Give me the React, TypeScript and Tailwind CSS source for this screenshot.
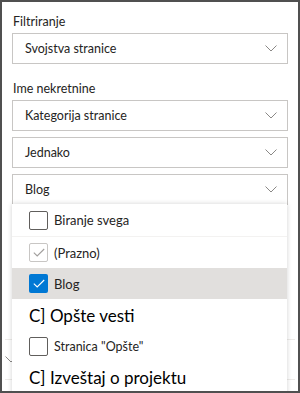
import React from "react";

const Chevron = () => (
  <svg width="12" height="7" viewBox="0 0 12 7" className="shrink-0">
    <path d="M0.5 0.5 L6 6 L11.5 0.5" fill="none" stroke="#8a8886" strokeWidth="1" />
  </svg>
);

const Select = ({ value }: { value: string }) => (
  <div className="h-[31px] border border-[#c8c6c4] bg-white flex items-center justify-between pl-[12px] pr-[10px]">
    <span className="mt-px text-[12.5px] text-[#252423]">{value}</span>
    <Chevron />
  </div>
);

const Check = ({ color }: { color: string }) => (
  <svg width="12" height="9" viewBox="0 0 12 9">
    <path d="M0.8 4.6 L4.2 8 L11.2 1" fill="none" stroke={color} strokeWidth="1.1" />
  </svg>
);

const Checkbox = ({ state }: { state: "off" | "on" | "disabled" }) => {
  if (state === "on")
    return (
      <div className="w-[19px] h-[19px] rounded-[2px] bg-[#0078d4] flex items-center justify-center">
        <Check color="#ffffff" />
      </div>
    );
  if (state === "disabled")
    return (
      <div className="w-[19px] h-[19px] rounded-[2px] border border-[#c8c6c4] flex items-center justify-center">
        <Check color="#a19f9d" />
      </div>
    );
  return <div className="w-[19px] h-[19px] rounded-[2px] border border-[#605e5c]" />;
};

const Option = ({
  label,
  state,
  active,
  small,
  className,
}: {
  label: string;
  state: "off" | "on" | "disabled";
  active?: boolean;
  small?: boolean;
  className: string;
}) => (
  <div className={`flex items-center pl-[17px] ${active ? "bg-[#e1dfdd]" : ""} ${className}`}>
    <Checkbox state={state} />
    <span className={`ml-[6px] mt-[2px] text-[#252423] ${small ? "text-[12.5px]" : "text-[13px]"}`}>{label}</span>
  </div>
);

export default function App() {
  return (
    <div className="relative w-[300px] h-[393px] overflow-hidden border-2 border-[#505050] bg-white font-['Lato',sans-serif]">
      <div className="px-[10px] pt-[9px]">
        <div className="ml-[1px] mb-[1px] text-[12.5px] leading-[21px] text-[#252423]">Filtriranje</div>
        <Select value="Svojstva stranice" />
        <div className="ml-[1px] mt-[15px] mb-[1px] text-[12.5px] leading-[20px] text-[#252423]">Ime nekretnine</div>
        <Select value="Kategorija stranice" />
        <div className="mt-[6px]">
          <Select value="Jednako" />
        </div>
        <div className="mt-[6px]">
          <Select value="Blog" />
        </div>
      </div>

      {/* content under the open menu */}
      <div className="mt-[134px] px-[3px]">
        <div className="h-[40px] border-t border-[#edebe9] flex items-center">
          <Chevron />
        </div>
        <div className="h-[40px] border-t border-[#edebe9]" />
      </div>

      {/* dropdown menu */}
      <div className="absolute left-[10px] top-[202px] w-[275px] h-[200px] bg-white shadow-[0_0_5px_rgba(0,0,0,0.18)]">
        <Option label="Biranje svega" state="off" className="h-[33px] border-b border-[#f3f2f1]" />
        <Option label="(Prazno)" state="disabled" className="h-[31px]" />
        <Option label="Blog" state="on" active className="h-[31px]" />
        <div className="h-[34px] pl-[17px] flex items-center text-[17px] text-black">C] Opšte vesti</div>
        <Option label={'Stranica "Opšte"'} state="off" small className="h-[26px]" />
        <div className="h-[38px] pl-[17px] flex items-center text-[17px] text-black">C] Izveštaj o projektu</div>
      </div>
    </div>
  );
}
